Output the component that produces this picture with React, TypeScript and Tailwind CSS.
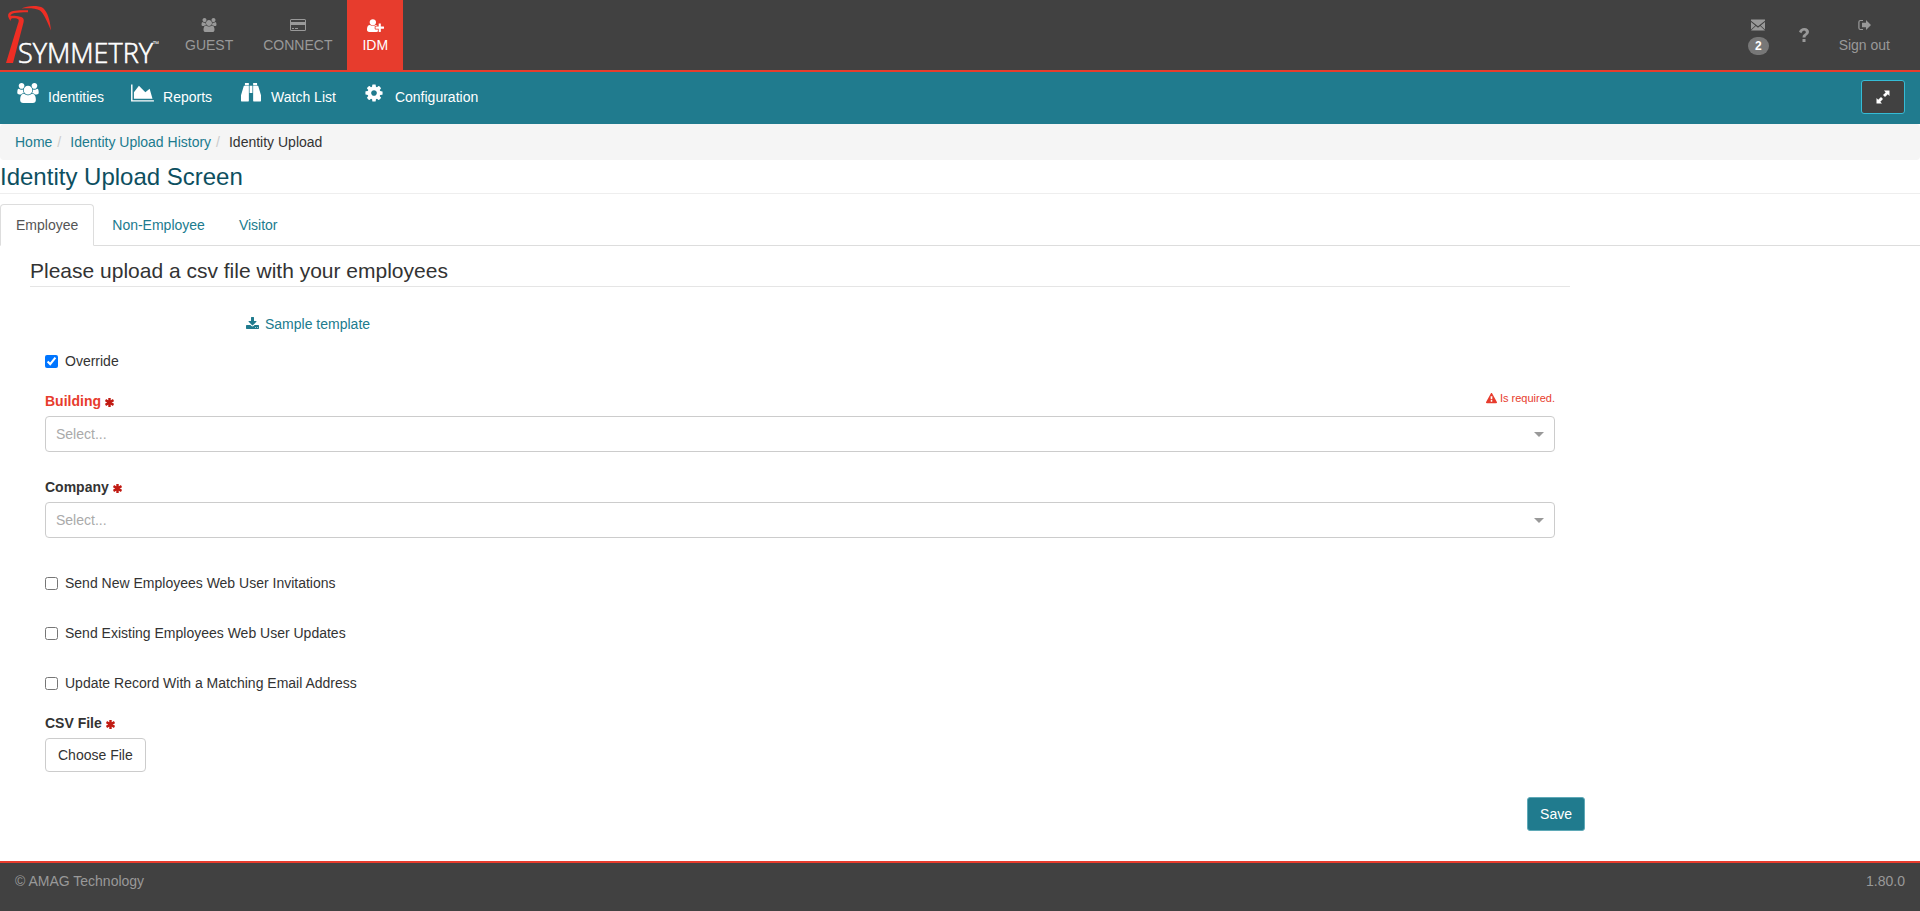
import { useState, type ReactNode } from "react";

interface IconProps {
    className?: string;
    viewBox: string;
    children: ReactNode;
}

function Icon({ className, viewBox, children }: IconProps) {
    return (
        <svg className={className} viewBox={viewBox} fill="currentColor" aria-hidden="true">
            {children}
        </svg>
    );
}

function UsersIcon({ className }: { className: string }) {
    return (
        <Icon className={className} viewBox="0 0 1920 1792">
            <path d="M593 896q-162 5-265 128h-134q-82 0-138-40.5t-56-118.5q0-353 124-353 6 0 43.5 21t97.5 42.5 119 21.5q67 0 133-23-5 37-5 66 0 139 81 256zm1071 637q0 120-73 189.5t-194 69.5h-874q-121 0-194-69.5t-73-189.5q0-53 3.5-103.5t14-109 26.5-108.5 43-97.5 62-81 85.5-53.5 111.5-20q10 0 43 21.5t73 48 107 48 135 21.5 135-21.5 107-48 73-48 43-21.5q61 0 111.5 20t85.5 53.5 62 81 43 97.5 26.5 108.5 14 109 3.5 103.5zm-1024-1277q0 106-75 181t-181 75-181-75-75-181 75-181 181-75 181 75 75 181zm704 384q0 159-112.5 271.5t-271.5 112.5-271.5-112.5-112.5-271.5 112.5-271.5 271.5-112.5 271.5 112.5 112.5 271.5zm576 225q0 78-56 118.5t-138 40.5h-134q-103-123-265-128 81-117 81-256 0-29-5-66 66 23 133 23 59 0 119-21.5t97.5-42.5 43.5-21q124 0 124 353zm-128-609q0 106-75 181t-181 75-181-75-75-181 75-181 181-75 181 75 75 181z" />
        </Icon>
    );
}

function CardIcon() {
    return (
        <Icon className="h-3.5 w-4" viewBox="0 0 16 14">
            <path
                fillRule="evenodd"
                d="M1.5 1h13A1.5 1.5 0 0 1 16 2.5v9a1.5 1.5 0 0 1-1.5 1.5h-13A1.5 1.5 0 0 1 0 11.500v-9A1.5 1.5 0 0 1 1.5 1zM1 2v2h14V2zM1 7v5h14V7z"
            />
            <path d="M2 10h2v1H2zM5 10h3v1H5z" />
        </Icon>
    );
}

function UserPlusIcon() {
    return (
        <Icon className="h-[15px] w-[17px]" viewBox="0 0 2048 1792">
            <path d="M704 896q-159 0-271.5-112.5t-112.5-271.5 112.5-271.5 271.5-112.5 271.5 112.5 112.5 271.5-112.5 271.5-271.5 112.5zm960 128h352q13 0 22.5 9.5t9.5 22.5v192q0 13-9.5 22.5t-22.5 9.5h-352v352q0 13-9.5 22.5t-22.5 9.5h-192q-13 0-22.5-9.5t-9.5-22.5v-352h-352q-13 0-22.5-9.5t-9.5-22.5v-192q0-13 9.5-22.5t22.5-9.5h352v-352q0-13 9.5-22.5t22.5-9.5h192q13 0 22.5 9.5t9.5 22.5v352zm-736 224q0 52 38 90t90 38h256v238q-68 50-171 50h-874q-121 0-194-69t-73-190q0-53 3.5-103.5t14-109 26.5-108.5 43-97.5 62-81 85.5-53.5 111.5-20q19 0 39 17 79 61 154.5 91.5t164.5 30.5 164.5-30.5 154.5-91.5q20-17 39-17 132 0 217 96h-223q-52 0-90 38t-38 90v192z" />
        </Icon>
    );
}

function ChartIcon() {
    return (
        <Icon className="h-5 w-[23px]" viewBox="0 0 2048 1792">
            <path d="M2048 1536v128h-2048v-1536h128v1408h1920zm-384-1024l256 896h-1664v-576l448-576 576 576z" />
        </Icon>
    );
}

function BinocularsIcon() {
    return (
        <Icon className="size-5" viewBox="0 0 1792 1792">
            <path d="M704 256v1344q0 26-19 45t-45 19H64q-26 0-45-19t-19-45v-512l249-809q7-23 31-23zM768 256h256v640H768zM1792 1088v512q0 26-19 45t-45 19h-576q-26 0-45-19t-19-45V256h424q24 0 31 23zM704 32v160H352V32q0-14 9-23t23-9h288q14 0 23 9t9 23zM1440 32v160h-352V32q0-14 9-23t23-9h288q14 0 23 9t9 23z" />
        </Icon>
    );
}

function CogIcon() {
    return (
        <Icon className="size-5" viewBox="0 0 1792 1792">
            <path d="M1152 896q0-106-75-181t-181-75-181 75-75 181 75 181 181 75 181-75 75-181zm512-109v222q0 12-8 23t-20 13l-185 28q-19 54-39 91 35 50 107 138 10 12 10 25t-9 23q-27 37-99 108t-94 71q-12 0-26-9l-138-108q-44 23-91 38-16 136-29 186-7 28-36 28h-222q-14 0-24.5-8.5t-11.5-21.5l-28-184q-49-16-90-37l-141 107q-10 9-25 9-14 0-25-11-126-114-165-168-7-10-7-23 0-12 8-23 15-21 51-66.5t54-70.5q-27-50-41-99l-183-27q-13-2-21-12.5t-8-23.5v-222q0-12 8-23t19-13l186-28q14-46 39-92-40-57-107-138-10-12-10-24 0-10 9-23 26-36 98.5-107.5t94.5-71.5q13 0 26 10l138 107q44-23 91-38 16-136 29-186 7-28 36-28h222q14 0 24.5 8.5t11.5 21.5l28 184q49 16 90 37l142-107q9-9 24-9 13 0 25 10 129 119 165 170 7 8 7 22 0 12-8 23-15 21-51 66.5t-54 70.5q26 50 41 98l183 28q13 2 21 12.5t8 23.5z" />
        </Icon>
    );
}

function EnvelopeIcon() {
    return (
        <Icon className="size-3.5" viewBox="0 0 14 14">
            <path d="M0 1.5h14v1.300L7 8.300 0 2.800zM0 4l4.300 3.500L0 11.500zM14 4v7.5L9.700 7.500zM4.8 8L7 9.700 9.200 8 14 12.500H0z" />
        </Icon>
    );
}

function QuestionIcon() {
    return (
        <Icon className="h-3.5 w-2.5" viewBox="0 0 10 14">
            <path d="M3.5 11h3v3h-3zM0 3.7Q1.6 0 5.2 0 10 .3 10 4.1 10 6 7.6 7.4 6.5 8 6.5 9.6h-3Q3.3 7 5.6 5.8 6.9 5.1 6.9 4.2 6.8 2.7 5 2.6 3.4 2.7 2.3 5.2z" />
        </Icon>
    );
}

function LogOutIcon() {
    return (
        <Icon className="h-3.5 w-[13px]" viewBox="0 0 13 14">
            <path d="M5 2v1H2.5Q1.5 3 1.5 4v6q0 1 1 1H5v1H2.5Q.3 12 .3 10V4q0-2 2.2-2z" />
            <path d="M8 2l5 5-5 5V9.300H4V4.700h4z" />
        </Icon>
    );
}

function ResizeIcon() {
    return (
        <Icon className="size-3.5" viewBox="0 0 14 14">
            <path d="M8 .5h5.5V6l-1.700-1.700-2.800 2.800-2-2 2.700-2.700zM6 13.500H.5V8l1.700 1.700 2.800-2.800 2 2-2.700 2.800z" />
        </Icon>
    );
}

function DownloadIcon() {
    return (
        <Icon className="h-3.5 w-[13px]" viewBox="0 0 1664 1792">
            <path d="M1280 1344q0-26-19-45t-45-19-45 19-19 45 19 45 45 19 45-19 19-45zm256 0q0-26-19-45t-45-19-45 19-19 45 19 45 45 19 45-19 19-45zm128-224v320q0 40-28 68t-68 28H96q-40 0-68-28t-28-68v-320q0-40 28-68t68-28h465l135 136q58 56 136 56t136-56l136-136h464q40 0 68 28t28 68zm-325-569q17 41-14 70l-448 448q-18 19-45 19t-45-19L339 621q-31-29-14-70 17-39 59-39h256V64q0-26 19-45t45-19h256q26 0 45 19t19 45v448h256q42 0 59 39z" />
        </Icon>
    );
}

function WarningIcon() {
    return (
        <Icon className="size-[11px]" viewBox="0 0 1792 1792">
            <path d="M1024 1375v-190q0-14-9.5-23.5t-22.5-9.5h-192q-13 0-22.5 9.5t-9.5 23.5v190q0 14 9.5 23.5t22.5 9.5h192q13 0 22.5-9.5t9.5-23.5zm-2-374l18-459q0-12-10-19-13-11-24-11h-220q-11 0-24 11-10 7-10 21l17 457q0 10 10 16.5t24 6.5h185q14 0 23.5-6.5t10.5-16.5zm-14-934l768 1408q35 63-2 126-17 29-46.5 46t-63.5 17h-1536q-34 0-63.5-17t-46.5-46q-37-63-2-126l768-1408q17-31 47-49t65-18 65 18 47 49z" />
        </Icon>
    );
}

function Logo() {
    return (
        <svg className="h-[70px] w-[170px]" viewBox="0 0 170 70" role="img" aria-label="Symmetry">
            <g fill="#ee2e24">
                <path d="M28 10.300C20 10.200 11.500 10.300 9 13c-1.700 2-1 4.500 1.500 8 .3-2 .5-2.700 2-2.800 2.500-.2 5 0 6 1.200.5 1.400 0 2.600-.5 4.100L6 63h7L23.500 22.500c.8-3.200 0-5-3.500-5.800-3.500-1-7.500-1.300-9.500-.9 0-2.800 5.500-3.400 17.500-3.600z" />
                <path d="M21.500 8.500C27 5.500 38 5 43 8 47.500 12 50 20 51 30.500 46.500 20 43.500 13.500 40 10.600 36 8 28 8.200 21.500 8.500z" />
            </g>
            <text
                x="18"
                y="63"
                stroke="white"
                strokeWidth="0.6"
                className="fill-white font-['Open_Sans',sans-serif] text-[27px] font-light"
            >
                SYMMETRY
            </text>
            <text x="153" y="47" className="fill-white font-['Open_Sans',sans-serif] text-[8px]">
                ™
            </text>
        </svg>
    );
}

function Asterisk() {
    return (
        <svg className="mt-0.5 size-[9px] text-[#c11a12]" viewBox="0 0 10 10" stroke="currentColor" strokeWidth="2.7" aria-hidden="true">
            <path d="M5 0v10M.5 2.400l9 5.200M.5 7.600l9-5.200" />
        </svg>
    );
}

const modules = [
    { label: "GUEST", icon: <UsersIcon className="h-3.5 w-4" />, active: false },
    { label: "CONNECT", icon: <CardIcon />, active: false },
    { label: "IDM", icon: <UserPlusIcon />, active: true },
];

const menu = [
    { label: "Identities", icon: <UsersIcon className="h-5 w-[22px]" /> },
    { label: "Reports", icon: <ChartIcon /> },
    { label: "Watch List", icon: <BinocularsIcon /> },
    { label: "Configuration", icon: <CogIcon /> },
];

const tabs = ["Employee", "Non-Employee", "Visitor"];

function Header() {
    return (
        <header className="flex justify-between border-b-2 border-[#e73c2d] bg-[#414141] text-[#999999]">
            <div className="flex">
                <a href="#home">
                    <Logo />
                </a>
                {modules.map((m) => (
                    <a
                        key={m.label}
                        href={`#${m.label.toLowerCase()}`}
                        className={`flex flex-col items-center p-[15px] ${m.active ? "bg-[#e73c2d] text-white" : ""}`}
                    >
                        <span className="flex h-5 items-center">{m.icon}</span>
                        {m.label}
                    </a>
                ))}
            </div>
            <div className="flex pr-[15px]">
                <a href="#messages" aria-label="Messages" className="flex flex-col items-center px-[15px] pt-[15px]">
                    <span className="flex h-5 items-center">
                        <EnvelopeIcon />
                    </span>
                    <span className="mt-0.5 rounded-full bg-[#777777] px-[7px] text-xs leading-[18px] font-bold text-white">2</span>
                </a>
                <a href="#help" aria-label="Help" className="flex items-center px-[15px]">
                    <QuestionIcon />
                </a>
                <a href="#signout" className="flex flex-col items-center p-[15px]">
                    <span className="flex h-5 items-center">
                        <LogOutIcon />
                    </span>
                    Sign out
                </a>
            </div>
        </header>
    );
}

function MenuBar() {
    return (
        <nav className="flex h-[52px] justify-between bg-[#207b8e] px-[15px] text-white">
            <div className="flex gap-[26px]">
                {menu.map((item) => (
                    <a key={item.label} href="#menu" className="flex gap-2 pt-[11px]">
                        <span className="flex h-5 w-[25px] justify-center">{item.icon}</span>
                        <span className="pt-1">{item.label}</span>
                    </a>
                ))}
            </div>
            <button
                aria-label="Full screen"
                className="mt-2 flex h-[34px] w-11 items-center justify-center rounded-[3px] border border-[#35bcd6] bg-[#414141]"
            >
                <ResizeIcon />
            </button>
        </nav>
    );
}

interface SelectFieldProps {
    id: string;
    label: string;
    error?: string;
}

function SelectField({ id, label, error }: SelectFieldProps) {
    return (
        <div>
            <div className="flex h-[25px] justify-between">
                <label htmlFor={id} className={`flex items-center gap-1 self-start font-bold ${error ? "text-[#e73c2d]" : ""}`}>
                    {label}
                    <Asterisk />
                </label>
                {error && (
                    <span className="flex h-3.5 items-center gap-[3px] text-[11px] text-[#e73c2d]">
                        <WarningIcon />
                        {error}
                    </span>
                )}
            </div>
            <div className="relative">
                <select
                    id={id}
                    className="block h-9 w-full appearance-none rounded border border-[#cccccc] bg-white px-2.5 text-[#aaaaaa]"
                >
                    <option>Select...</option>
                </select>
                <svg className="pointer-events-none absolute top-4 right-[11px] h-[5px] w-2.5 fill-[#999999]" viewBox="0 0 10 5" aria-hidden="true">
                    <path d="M0 0h10L5 5z" />
                </svg>
            </div>
        </div>
    );
}

function CheckField({ label, defaultChecked }: { label: string; defaultChecked?: boolean }) {
    return (
        <label className="flex w-fit items-center gap-[7px]">
            <input type="checkbox" defaultChecked={defaultChecked} className="size-[13px]" />
            {label}
        </label>
    );
}

function UploadForm() {
    return (
        <form className="w-10/12 px-[30px] pt-[13px]" onSubmit={(e) => e.preventDefault()}>
            <h2 className="border-b border-[#e5e5e5] pb-[3px] text-[21px] leading-6">Please upload a csv file with your employees</h2>
            <div className="px-[15px]">
                <div className="pt-[27px] pl-[201px]">
                    <a href="#template" className="flex w-fit items-center gap-1.5 text-[#207b8e]">
                        <DownloadIcon />
                        Sample template
                    </a>
                </div>
                <div className="pt-[17px]">
                    <CheckField label="Override" defaultChecked />
                </div>
                <div className="flex flex-col gap-[25px] pt-5">
                    <SelectField id="building" label="Building" error="Is required." />
                    <SelectField id="company" label="Company" />
                </div>
                <div className="flex flex-col gap-[30px] pt-[35px]">
                    <CheckField label="Send New Employees Web User Invitations" />
                    <CheckField label="Send Existing Employees Web User Updates" />
                    <CheckField label="Update Record With a Matching Email Address" />
                </div>
                <div className="pt-5">
                    <label htmlFor="csv" className="flex h-[25px] items-start font-bold">
                        <span className="flex items-center gap-1">
                            CSV File
                            <Asterisk />
                        </span>
                    </label>
                    <button id="csv" type="button" className="h-[34px] rounded border border-[#cccccc] bg-white px-3">
                        Choose File
                    </button>
                </div>
            </div>
            <div className="-mr-[15px] flex justify-end pt-[25px] pb-[30px]">
                <button type="submit" className="h-[34px] rounded-[3px] border border-[#5fa9b7] bg-[#207b8e] px-3 text-white">
                    Save
                </button>
            </div>
        </form>
    );
}

function App() {
    const [activeTab, setActiveTab] = useState("Employee");

    return (
        <div className="flex min-h-screen flex-col bg-white font-['Liberation_Sans',Arial,sans-serif] text-sm leading-5 text-[#333333]">
            <Header />
            <MenuBar />
            <nav aria-label="Breadcrumb" className="flex rounded bg-[#f5f5f5] px-[15px] py-2">
                <a href="#home" className="text-[#207b8e]">
                    Home
                </a>
                <span className="pr-[9px] pl-[5px] text-[#cccccc]">/</span>
                <a href="#history" className="text-[#207b8e]">
                    Identity Upload History
                </a>
                <span className="pr-[9px] pl-[5px] text-[#cccccc]">/</span>
                <span>Identity Upload</span>
            </nav>
            <h1 className="border-b border-[#eeeeee] pt-[3px] pb-0.5 text-2xl leading-7 text-[#0d4f5f]">Identity Upload Screen</h1>
            <div role="tablist" className="mt-2.5 flex gap-0.5 border-b border-[#dddddd]">
                {tabs.map((tab) => (
                    <button
                        key={tab}
                        role="tab"
                        aria-selected={tab === activeTab}
                        onClick={() => setActiveTab(tab)}
                        className={`-mb-px rounded-t border px-[15px] py-2.5 ${
                            tab === activeTab
                                ? "border-[#dddddd] border-b-white bg-white text-[#555555]"
                                : "border-transparent text-[#207b8e]"
                        }`}
                    >
                        {tab}
                    </button>
                ))}
            </div>
            <main>
                <UploadForm />
            </main>
            <footer className="flex grow justify-between border-t-2 border-[#e73c2d] bg-[#414141] px-[15px] pt-2 text-[#999999]">
                <span>© AMAG Technology</span>
                <span>1.80.0</span>
            </footer>
        </div>
    );
}

export default App;
